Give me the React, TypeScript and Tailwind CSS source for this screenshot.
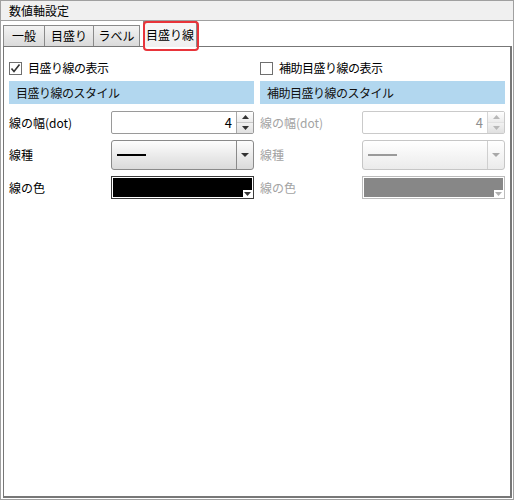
import React from "react";

const font = { fontFamily: '"Noto Sans CJK JP", "Noto Sans", sans-serif' };

const CheckBox: React.FC<{ checked?: boolean }> = ({ checked }) => (
  <div className="w-[13px] h-[13px] border border-[#6f6f6f] bg-white flex items-center justify-center shrink-0">
    {checked && (
      <svg width="11" height="11" viewBox="0 0 11 11">
        <path d="M1.5 5.5 L4 8.5 L9.5 1.5" fill="none" stroke="#333" strokeWidth="1.6" />
      </svg>
    )}
  </div>
);

const SpinBox: React.FC<{ disabled?: boolean }> = ({ disabled }) => (
  <div
    className={`w-[143px] h-[23px] flex border rounded-[2px] bg-white ${
      disabled ? "border-[#cacaca]" : "border-[#9a9a9a]"
    }`}
  >
    <div
      className={`flex-1 flex items-center justify-end pr-[4px] text-[13px] ${
        disabled ? "text-[#8f8f8f]" : "text-black"
      }`}
    >
      4
    </div>
    <div className={`w-[17px] flex flex-col border-l ${disabled ? "border-[#d6d6d6]" : "border-[#a8a8a8]"}`}>
      <div className="flex-1 flex items-center justify-center bg-gradient-to-b from-white to-[#ececec]">
        <svg width="7" height="4" viewBox="0 0 7 4">
          <path d="M0 4 L3.5 0 L7 4 Z" fill={disabled ? "#b8b8b8" : "#333"} />
        </svg>
      </div>
      <div className={`flex-1 flex items-center justify-center bg-gradient-to-b from-[#f2f2f2] to-[#e0e0e0] border-t ${disabled ? "border-[#e2e2e2]" : "border-[#c8c8c8]"}`}>
        <svg width="7" height="4" viewBox="0 0 7 4">
          <path d="M0 0 L7 0 L3.5 4 Z" fill={disabled ? "#b8b8b8" : "#333"} />
        </svg>
      </div>
    </div>
  </div>
);

const LineCombo: React.FC<{ disabled?: boolean }> = ({ disabled }) => (
  <div
    className={`w-[143px] h-[30px] flex border rounded-[3px] bg-gradient-to-b ${
      disabled
        ? "border-[#c6c6c6] from-white to-[#ebebeb]"
        : "border-[#8a8a8a] from-[#fdfdfd] to-[#dadada]"
    }`}
  >
    <div className="flex-1 flex items-center pl-[5px]">
      <div className={`w-[29px] h-[2px] ${disabled ? "bg-[#9a9a9a]" : "bg-black"}`} />
    </div>
    <div className={`w-[17px] flex items-center justify-center border-l ${disabled ? "border-[#cfcfcf]" : "border-[#8a8a8a]"}`}>
      <svg width="8" height="4" viewBox="0 0 8 4">
        <path d="M0 0 L8 0 L4 4 Z" fill={disabled ? "#a8a8a8" : "#333"} />
      </svg>
    </div>
  </div>
);

const ColorBox: React.FC<{ disabled?: boolean }> = ({ disabled }) => (
  <div
    className={`relative w-[143px] h-[23px] border p-[1px] bg-white ${
      disabled ? "border-[#bcbcbc]" : "border-[#3c3c3c]"
    }`}
  >
    <div className={`w-full h-full ${disabled ? "bg-[#878787]" : "bg-black"}`} />
    <div className="absolute right-[1px] bottom-[1px] w-[9px] h-[7px] bg-white flex items-center justify-center">
      <svg width="7" height="4" viewBox="0 0 7 4">
        <path d="M0 0 L7 0 L3.5 4 Z" fill={disabled ? "#b0b0b0" : "#333"} />
      </svg>
    </div>
  </div>
);

const Column: React.FC<{ show: string; style: string; checked?: boolean; disabled?: boolean }> = ({
  show,
  style,
  checked,
  disabled,
}) => {
  const label = disabled ? "text-[#a3a3a3]" : "text-black";
  return (
    <div className="flex flex-col">
      {/* 表示チェック */}
      <div className="h-[22px] flex items-center gap-[6px]">
        <CheckBox checked={checked} />
        <span className="text-[12px] text-black tracking-[-0.5px]">{show}</span>
      </div>

      {/* スタイル見出し */}
      <div className="mt-[2px] h-[23px] bg-[#b2d7ef] flex items-center pl-[7px] text-[12px] font-normal text-[#111] tracking-[-0.5px]">
        {style}
      </div>

      <div className="mt-[7px] flex items-center">
        <div className={`w-[102px] text-[12px] ${label}`}>線の幅(dot)</div>
        <SpinBox disabled={disabled} />
      </div>
      <div className="mt-[6px] flex items-center">
        <div className={`w-[102px] text-[12px] ${label}`}>線種</div>
        <LineCombo disabled={disabled} />
      </div>
      <div className="mt-[6px] flex items-center">
        <div className={`w-[102px] text-[12px] ${label}`}>線の色</div>
        <ColorBox disabled={disabled} />
      </div>
    </div>
  );
};

const tabBase =
  "h-[21px] flex items-center justify-center border-t border-l border-[#8a8a8a] bg-gradient-to-b from-[#f3f3f3] to-[#dadada] text-[12px] text-black";

export default function App() {
  return (
    <div style={font} className="w-[514px] h-[500px] flex flex-col border border-[#a0a0a0] bg-white">
      {/* Header */}
      <div className="h-[20px] shrink-0 bg-[#f0f0f0] border-b border-[#a0a0a0] flex items-center pl-[8px] text-[12px] text-black">
        数値軸設定
      </div>

      <div className="flex-1 flex flex-col pl-[2px] pr-[1px] pb-[1px]">
        {/* Tabs */}
        <div className="relative h-[25px] shrink-0 flex items-end">
          <div className={`${tabBase} w-[41px]`}>一般</div>
          <div className={`${tabBase} w-[49px]`}>目盛り</div>
          <div className={`${tabBase} w-[47px] border-r`}>ラベル</div>
          <div className="ml-[3px] w-[54px] h-[26px] -mb-px relative z-10 flex items-center justify-center border-t border-l border-r border-[#8a8a8a] bg-gradient-to-b from-[#f7f7f7] to-[#f0f0f0] text-[12px] text-black">
            目盛り線
          </div>
          {/* 注目枠 */}
          <div className="absolute left-[140px] top-0 w-[56px] h-[30px] border-2 border-[#e8343a] rounded-[4px] z-20" />
        </div>

        {/* Panel */}
        <div className="flex-1 border-l border-t border-r-2 border-b-2 border-[#777777] bg-white px-[5px] pt-[10px]">
          <div className="grid grid-cols-[245px_245px] gap-x-[6px]">
            <Column show="目盛り線の表示" style="目盛り線のスタイル" checked />
            <Column show="補助目盛り線の表示" style="補助目盛り線のスタイル" disabled />
          </div>
        </div>
      </div>
    </div>
  );
}
